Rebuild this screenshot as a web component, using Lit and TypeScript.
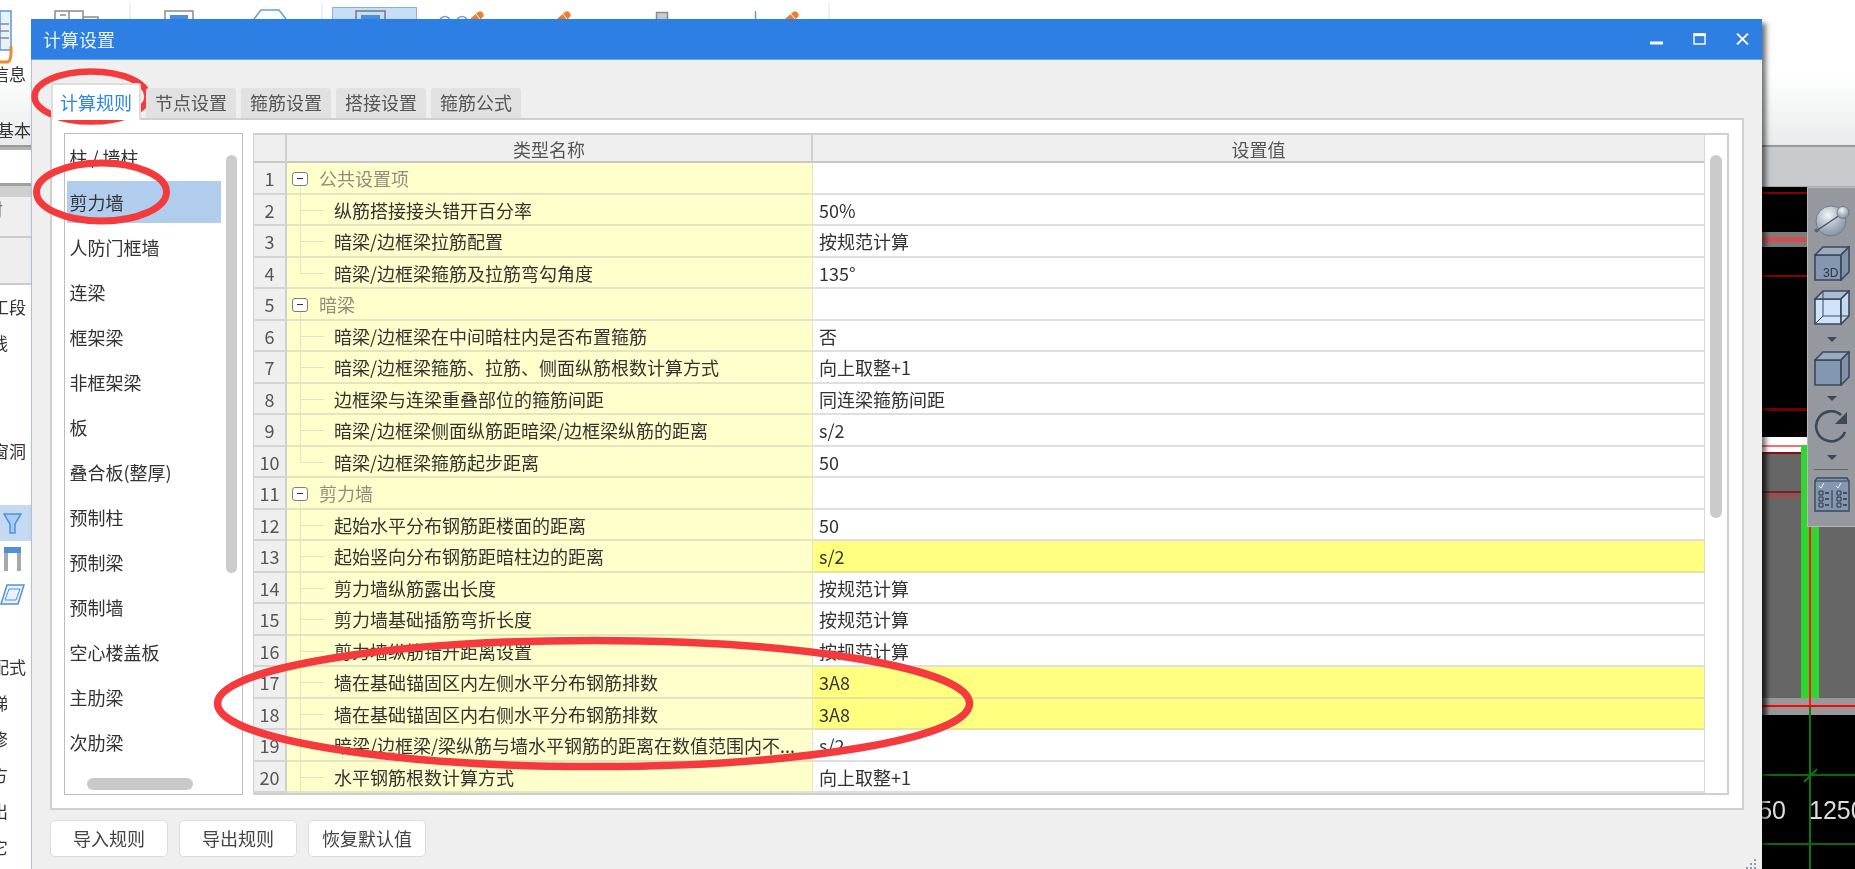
import { LitElement, html, css, svg } from "lit";
import { customElement } from "lit/decorators.js";

type Row = { name: string; val?: string; group?: boolean; hl?: boolean; last?: boolean };
const ROWS: Row[] = [
  { name: "公共设置项", group: true },
  { name: "纵筋搭接接头错开百分率", val: "50%" },
  { name: "暗梁/边框梁拉筋配置", val: "按规范计算" },
  { name: "暗梁/边框梁箍筋及拉筋弯勾角度", val: "135°", last: true },
  { name: "暗梁", group: true },
  { name: "暗梁/边框梁在中间暗柱内是否布置箍筋", val: "否" },
  { name: "暗梁/边框梁箍筋、拉筋、侧面纵筋根数计算方式", val: "向上取整+1" },
  { name: "边框梁与连梁重叠部位的箍筋间距", val: "同连梁箍筋间距" },
  { name: "暗梁/边框梁侧面纵筋距暗梁/边框梁纵筋的距离", val: "s/2" },
  { name: "暗梁/边框梁箍筋起步距离", val: "50", last: true },
  { name: "剪力墙", group: true },
  { name: "起始水平分布钢筋距楼面的距离", val: "50" },
  { name: "起始竖向分布钢筋距暗柱边的距离", val: "s/2", hl: true },
  { name: "剪力墙纵筋露出长度", val: "按规范计算" },
  { name: "剪力墙基础插筋弯折长度", val: "按规范计算" },
  { name: "剪力墙纵筋错开距离设置", val: "按规范计算" },
  { name: "墙在基础锚固区内左侧水平分布钢筋排数", val: "3A8", hl: true },
  { name: "墙在基础锚固区内右侧水平分布钢筋排数", val: "3A8", hl: true },
  { name: "暗梁/边框梁/梁纵筋与墙水平钢筋的距离在数值范围内不...", val: "s/2" },
  { name: "水平钢筋根数计算方式", val: "向上取整+1" },
];
const LIST = ["柱 / 墙柱", "剪力墙", "人防门框墙", "连梁", "框架梁", "非框架梁", "板", "叠合板(整厚)", "预制柱", "预制梁", "预制墙", "空心楼盖板", "主肋梁", "次肋梁"];
const TABS = ["计算规则", "节点设置", "箍筋设置", "搭接设置", "箍筋公式"];

const cube = html`<svg class="ti" width="36" height="35" viewBox="0 0 36 35"><path d="M1 9H27V34H1Z" fill="#8497b0" stroke="#3d4757" stroke-width="1.6"/><path d="M1 9L9 1H35L27 9Z" fill="#9aaabf" stroke="#3d4757" stroke-width="1.6"/><path d="M27 9L35 1V26L27 34Z" fill="#7f92ab" stroke="#3d4757" stroke-width="1.6"/></svg>`;
const arrow = html`<svg class="ta" width="10" height="5" viewBox="0 0 10 5"><path d="M0 0H10L5 5Z" fill="#3d4757"/></svg>`;
const pencil = (x: number) => svg`<path d="M${x + 2} 21L${x + 9} 15" stroke="#f07f2c" stroke-width="7" stroke-linecap="round"/><path d="M${x + 5} 14L${x + 9} 19" stroke="#fff" stroke-width="1"/>`;

@customElement("app-root")
export class AppRoot extends LitElement {
  static styles = css`
    :host { display: block; width: 1855px; height: 869px; overflow: hidden; }
    * { box-sizing: border-box; }
    .app { position: relative; width: 1855px; height: 869px; overflow: hidden; background: #fff; display: flex; flex-direction: column; color: #333;
      font: 18px/24px "Noto Sans CJK SC", "Noto Sans", sans-serif; filter: blur(0.45px); }
    .ribbon { position: relative; height: 147px; flex: none; background: linear-gradient(#fff 50%, #e9ecec); border-bottom: 2px solid #9a9a9a; }
    .ribbon svg { position: absolute; left: 0; top: 0; }
    .rlabels { width: 31px; height: 100%; overflow: hidden; padding-top: 62px; display: flex; flex-direction: column; gap: 32px; position: relative; }
    .rlabels div { display: flex; justify-content: flex-end; white-space: nowrap; padding-right: 5px; font-size: 17px; }
    .rlabels div.e0 { padding-right: 0; }
    .main { flex: 1; display: flex; min-height: 0; }
    .side { width: 31px; flex: none; overflow: hidden; display: flex; flex-direction: column; background: #fff; }
    .s1 { height: 36px; flex: none; border-top: 3px solid #b3b3b3; }
    .s2 { height: 14px; flex: none; background: #cdcfd1; border-top: 3px solid #a0a0a0; }
    .s3 { height: 41px; flex: none; background: #efefef; border-bottom: 2px solid #ccc; display: flex; justify-content: flex-end; align-items: flex-start; padding-right: 28px; font-size: 17px; color: #777; white-space: nowrap; }
    .s4 { height: 47px; flex: none; background: #eee; border-bottom: 2px solid #ccc; margin-bottom: 4px; }
    .srow { height: 36px; flex: none; display: flex; justify-content: flex-end; align-items: center; white-space: nowrap; font-size: 17px; }
    .srow.wide { padding-right: 5px; }
    .srow.narrow { padding-right: 23px; }
    .srow.icon { justify-content: center; padding-right: 6px; }
    .srow.sel { background: #c5d9f1; }
    .right { flex: 1; display: flex; flex-direction: column; min-width: 0; }
    .band { height: 40px; flex: none; background: #c8cbce; border-bottom: 1px solid #aaa; }
    .canvas { flex: 1; display: block; }
    .canvas text { font: 25px "Liberation Sans", sans-serif; fill: #ddd; }
    .tool { position: absolute; left: 1807px; top: 187px; width: 48px; height: 340px; background: #95989e; border: 1px solid #b5b7ba; border-right: 0; display: flex; flex-direction: column; align-items: flex-start; padding: 16px 0 0 6px; }
    .tool svg { display: block; flex: none; }
    .ti { margin-bottom: 9px; }
    .ta { margin: 1px 0 9px 13px; }
    .tsep { width: 34px; height: 1px; background: #5f636a; margin: 0 0 7px 0; flex: none; }

    .dialog { position: absolute; left: 31px; top: 19px; width: 1731px; height: 850px; background: #efefef; display: flex; flex-direction: column; box-shadow: 4px 4px 5px rgba(0,0,0,.55); border-left: 1px solid #b4c0d0; }
    .title { height: 41px; flex: none; margin-left: -1px; background: #2d7fe3; border-bottom: 1px solid #6aa5ee; color: #fff; display: flex; align-items: center; padding-left: 12px; font-size: 18px; }
    .title .t { flex: 1; color: #e8f1fc; }
    .wbtns { display: flex; align-items: flex-start; gap: 30px; padding-right: 13px; }
    .wbtns svg { display: block; }
    .dbody { flex: 1; display: flex; flex-direction: column; padding: 0 18px 0 18px; position: relative; }
    .tabs { display: flex; gap: 5px; height: 34px; margin: 24px 0 0 1px; align-items: flex-end; flex: none; position: relative; z-index: 1; }
    .tab { width: 90px; height: 30px; background: #e1e1e1; color: #555; text-align: center; line-height: 29px; border-radius: 3px 3px 0 0; font-size: 18px; }
    .tab.on { height: 37px; margin-bottom: -2px; background: #fff; color: #2d86e8; line-height: 35px; border: 2px solid #ddd; border-bottom: 0; }
    .panel { height: 692px; flex: none; background: #fff; border: 2px solid #d0d0d0; padding: 13px 13px 13px 12px; display: flex; gap: 10px; }
    .list { width: 179px; flex: none; height: 100%; border: 1.5px solid #bdbdbd; padding: 0 0 0 1.5px; position: relative; display: flex; flex-direction: column; overflow: hidden; }
    .li { width: 154px; height: 42px; margin: 1.5px 0; flex: none; padding-left: 3px; line-height: 42px; color: #333; }
    .li.sel { background: #b1cdee; }
    .vs1 { position: absolute; left: 161px; top: 21px; width: 11px; height: 418px; border-radius: 6px; background: #cbcbcb; }
    .hs1 { position: absolute; left: 22px; top: 644px; width: 106px; height: 12px; border-radius: 6px; background: #c9c9c9; }
    .grid { flex: 1; min-width: 0; height: 100%; border: 2px solid #cfcfcf; border-left-width: 1px; display: flex; }
    .table { flex: 1; min-width: 0; display: flex; flex-direction: column; }
    .tr { display: grid; grid-template-columns: 33px 526px 1fr; height: 31.5px; flex: none; }
    .tr.head { height: 28px; }
    .tr > div { border-bottom: 2px solid #dfdfdf; white-space: nowrap; overflow: hidden; }
    .head > div { background: #efefef; text-align: center; line-height: 29px; color: #555; border-bottom-color: #c9c9c9; border-right: 2px solid #d0d0d0; }
    .head > div:last-child { border-right: 0; }
    .num { background: #efefef; text-align: center; line-height: 31px; color: #555; border-right: 2px solid #d0d0d0; border-bottom-color: #d4d4d4 !important; }
    .name { background: #ffffcb; position: relative; padding-left: 47px; line-height: 31px; color: #333; border-right: 1px solid #e6e6c0; border-bottom-color: #e4e4c4 !important; }
    .name.group { padding-left: 32px; color: #8e8e80; }
    .name::before { content: ""; position: absolute; left: 12.5px; top: 0; bottom: -2px; width: 1px; background: #e2e2c6; }
    .name::after { content: ""; position: absolute; left: 13px; top: 15px; width: 24px; height: 1px; background: #e2e2c6; }
    .name.last::before { bottom: 14px; }
    .name.group::after { display: none; }
    .name.group::before { top: 22px; }
    .box { position: absolute; left: 5px; top: 9px; width: 16px; height: 14px; background: #fff; border: 1.5px solid #7d7d7d; border-radius: 3px; z-index: 1; }
    .box::after { content: ""; position: absolute; left: 3.5px; top: 4.5px; width: 6px; height: 1.5px; background: #333; }
    .val { background: #fff; padding-left: 6px; line-height: 31px; color: #333; }
    .val.hl { background: #ffff80; border-bottom-color: #e4e4a0 !important; }
    .vs2 { width: 23px; flex: none; background: #fff; border-left: 1.5px solid #d8d8d8; padding: 20px 0 0 4.5px; }
    .vs2 div { width: 12px; height: 363px; border-radius: 6px; background: #cbcbcb; }
    .btns { display: flex; gap: 11px; margin-top: 10px; flex: none; }
    .btn { width: 118px; height: 37px; background: #fff; border: 1.5px solid #dcdcdc; border-radius: 5px; text-align: center; line-height: 34px; color: #444; font-size: 18px; }
    .grip { position: absolute; right: 5px; bottom: 0; }
    .marks { position: absolute; left: 0; top: 0; pointer-events: none; }
  `;

  render() {
    return html`<div class="app">
      <div class="ribbon">
        <svg width="1855" height="147" viewBox="0 0 1855 147">
          ${svg`
          <path d="M0 11H11V50H0Z" fill="#e9f1fb" stroke="#5b96dd" stroke-width="1.5"/>
          <path d="M0 24H9M0 31H9M0 38H9" stroke="#888" stroke-width="1.5"/>
          <path d="M0 62H7Q11 62 11 52V46" fill="none" stroke="#ee8a2c" stroke-width="3"/>
          <path d="M55 19V11H83V19M98 19V17H83M69 11V19M60 15H66" fill="none" stroke="#8a8a8a" stroke-width="1.5"/>
          <path d="M130 3V19M322 3V19M829 3V19" stroke="#e0e0e0" stroke-width="1"/>
          <path d="M165 19V11H193V19" fill="none" stroke="#8a8a8a" stroke-width="1.5"/><rect x="170" y="15" width="18" height="4" fill="#4a8fe0"/>
          <path d="M254 19L261 10H279L286 19" fill="none" stroke="#5f9fe6" stroke-width="1.5"/>
          <rect x="332.5" y="7.5" width="84" height="14" fill="#c7def8" stroke="#80b3ee"/>
          <path d="M356 19V11H385V19" fill="none" stroke="#777" stroke-width="1.5"/><rect x="361" y="15" width="19" height="4" fill="#4a8fe0"/>
          <circle cx="445" cy="22" r="5.5" fill="none" stroke="#6aa2e2" stroke-width="1.5"/><circle cx="462" cy="22" r="5.5" fill="none" stroke="#6aa2e2" stroke-width="1.5"/>
          ${pencil(471)}${pencil(558)}${pencil(786)}
          <rect x="656.5" y="12.5" width="11" height="8" fill="#ccc" stroke="#8c8c8c" stroke-width="1.5"/>
          <path d="M755.5 11V19" stroke="#5f9fe6" stroke-width="1.5"/>
          `}
        </svg>
        <div class="rlabels"><div>信息</div><div class="e0">基本</div></div>
      </div>
      <div class="main">
        <div class="side">
          <div class="s1"></div><div class="s2"></div><div class="s3">材</div><div class="s4"></div>
          <div class="srow wide">工段</div>
          <div class="srow narrow">线</div>
          <div class="srow"></div><div class="srow"></div>
          <div class="srow wide">窗洞</div>
          <div class="srow"></div>
          <div class="srow icon sel"><svg width="19" height="21" viewBox="0 0 19 21"><path d="M1 1H18L12 11V20H7V11Z" fill="#a9cdf2" stroke="#4e92dc" stroke-width="1.5"/></svg></div>
          <div class="srow icon"><svg width="19" height="24" viewBox="0 0 19 24"><rect x="1" y="0" width="17" height="6" fill="#4e92dc"/><rect x="1" y="6" width="4" height="18" fill="#a5a8ac"/><rect x="14" y="6" width="4" height="18" fill="#a5a8ac"/></svg></div>
          <div class="srow icon"><svg width="25" height="22" viewBox="0 0 25 22"><path d="M7 1H24L18 20H1Z" fill="#eaf2fb" stroke="#4e92dc" stroke-width="1.5"/><path d="M9 5H20L16 16H5Z" fill="none" stroke="#4e92dc"/></svg></div>
          <div class="srow"></div>
          <div class="srow wide">配式</div>
          <div class="srow narrow">梯</div>
          <div class="srow narrow">修</div>
          <div class="srow narrow">方</div>
          <div class="srow narrow">出</div>
          <div class="srow narrow">它</div>
        </div>
        <div class="right">
          <div class="band"></div>
          <svg class="canvas" width="1824" height="682" viewBox="31 187 1824 682">
            ${svg`
            <defs><linearGradient id="shade" x1="0" x2="1"><stop offset="0" stop-color="#000" stop-opacity=".45"/><stop offset="1" stop-color="#000" stop-opacity="0"/></linearGradient></defs>
            <rect x="31" y="187" width="1824" height="682" fill="#000"/>
            <rect x="1762" y="192" width="93" height="2" fill="#8a0000"/>
            <rect x="1762" y="232" width="93" height="15" fill="#7c7c7c"/><rect x="1762" y="237" width="93" height="5" fill="#d24f4f"/>
            <rect x="1762" y="275" width="93" height="2" fill="#8a0000"/>
            <rect x="1762" y="408" width="93" height="3" fill="#6e0000"/>
            <rect x="1762" y="437" width="93" height="16" fill="#fff"/>
            <rect x="1762" y="445" width="93" height="2" fill="#f47070"/>
            <rect x="1762" y="452" width="93" height="2" fill="#8a1010"/>
            <rect x="1762" y="454" width="93" height="244" fill="#666"/>
            <rect x="1762" y="491" width="93" height="2" fill="#802020"/><rect x="1762" y="495" width="93" height="2" fill="#c83a3a"/>
            <rect x="1762" y="698" width="93" height="17" fill="#999"/>
            <rect x="1801" y="445" width="18" height="253" fill="#2ed62e"/>
            <rect x="1809" y="445" width="2" height="261" fill="#ee1c1c"/>
            <rect x="1762" y="705" width="93" height="2" fill="#f00"/>
            <rect x="1762" y="454" width="8" height="261" fill="url(#shade)"/>
            <rect x="1809" y="707" width="2" height="162" fill="#0a7a0a"/>
            <rect x="1762" y="774" width="93" height="2" fill="#0a6a0a"/>
            <rect x="1762" y="843" width="93" height="2" fill="#0a6a0a"/>
            <path d="M1804 782L1817 769" stroke="#0a7a0a" stroke-width="2"/>
            <text x="1786" y="819" text-anchor="end">250</text>
            <text x="1809" y="819">1250</text>
            `}
          </svg>
        </div>
      </div>

      <div class="tool">
        <svg width="36" height="33" viewBox="0 0 36 33" style="margin-bottom:9px">
          ${svg`<defs><radialGradient id="ball" cx=".4" cy=".3" r=".8"><stop offset="0" stop-color="#f2f4f7"/><stop offset=".6" stop-color="#a3aebd"/><stop offset="1" stop-color="#7b8799"/></radialGradient></defs>
          <circle cx="17" cy="17" r="15" fill="url(#ball)" stroke="#707b8b"/>
          <path d="M2 27L29 9" stroke="#4c5665" stroke-width="1.5"/><circle cx="2.5" cy="26.5" r="2" fill="#5b6574"/>
          <circle cx="29" cy="8.5" r="6" fill="url(#ball)" stroke="#6e7989"/>`}
        </svg>
        <div style="position:relative;height:35px;margin-bottom:9px;flex:none">
          ${cube}
          <svg width="22" height="12" style="position:absolute;left:8px;top:20px;overflow:visible">${svg`<text x="1" y="11" font-family="Liberation Sans" font-size="12" fill="#2e3645">3D</text>`}</svg>
        </div>
        <svg width="36" height="35" viewBox="0 0 36 35" style="margin-bottom:11px"><path d="M1 9H27V34H1Z" fill="#cfe4fb" stroke="#3d4757" stroke-width="1.6"/><path d="M1 9L9 1H35L27 9Z" fill="#aabdd6" stroke="#3d4757" stroke-width="1.6"/><path d="M27 9L35 1V26L27 34Z" fill="#c3d9f2" stroke="#3d4757" stroke-width="1.6"/><path d="M9 1V26H35M9 26L1 34" fill="none" stroke="#3d4757"/></svg>
        ${arrow}
        ${cube}
        ${arrow}
        <svg width="36" height="33" viewBox="0 0 36 33" style="margin-bottom:11px"><path d="M31 22A15 15 0 1 1 27 5" fill="none" stroke="#3d4757" stroke-width="2.6"/><path d="M33 2V14H21Z" fill="#3d4757"/></svg>
        ${arrow}
        <div class="tsep"></div>
        <svg width="36" height="35" viewBox="0 0 36 35"><path d="M1 4L3 1H33L35 4V34H1Z" fill="#8497b0" stroke="#3d4757" stroke-width="1.4"/><path d="M1 4H35M18 13V31" stroke="#3d4757" stroke-width="1.2"/><path d="M5 9L7 11L10 6M22 9L24 11L27 6" fill="none" stroke="#e6edf5" stroke-width="1"/><path d="M5 14H9V18H5ZM5 20H9V24H5ZM5 26H9V30H5ZM23 14H27V18H23ZM23 20H27V24H23ZM23 26H27V30H23Z" fill="none" stroke="#2e3645"/><path d="M11 16H15M11 22H15M11 28H15M29 16H33M29 22H33M29 28H33" stroke="#2e3645" stroke-width="1.4"/></svg>
      </div>

      <div class="dialog">
        <div class="title">
          <div class="t">计算设置</div>
          <div class="wbtns">
            <svg width="13" height="12" viewBox="0 0 13 12"><rect x="0" y="8.5" width="13" height="3" fill="#fff"/></svg>
            <svg width="13" height="12" viewBox="0 0 13 12"><path d="M1 1H12V11H1Z" fill="none" stroke="#fff" stroke-width="1.4"/><rect x="0.5" y="0.5" width="12" height="2.6" fill="#fff"/></svg>
            <svg width="13" height="12" viewBox="0 0 13 12"><path d="M1 0.5L12 11.5M12 0.5L1 11.5" stroke="#fff" stroke-width="1.8"/></svg>
          </div>
        </div>
        <div class="dbody">
          <div class="tabs">${TABS.map((t, i) => html`<div class="tab ${i === 0 ? "on" : ""}">${t}</div>`)}</div>
          <div class="panel">
            <div class="list">
              ${LIST.map((t, i) => html`<div class="li ${i === 1 ? "sel" : ""}">${t}</div>`)}
              <div class="vs1"></div><div class="hs1"></div>
            </div>
            <div class="grid">
              <div class="table">
                <div class="tr head"><div></div><div>类型名称</div><div>设置值</div></div>
                ${ROWS.map((r, i) => html`<div class="tr">
                  <div class="num">${i + 1}</div>
                  <div class="name ${r.group ? "group" : ""} ${r.last ? "last" : ""}">${r.group ? html`<span class="box"></span>` : ""}${r.name}</div>
                  <div class="val ${r.hl ? "hl" : ""}">${r.val ?? ""}</div>
                </div>`)}
              </div>
              <div class="vs2"><div></div></div>
            </div>
          </div>
          <div class="btns"><div class="btn">导入规则</div><div class="btn">导出规则</div><div class="btn">恢复默认值</div></div>
          <svg class="grip" width="13" height="11" viewBox="0 0 13 11"><path d="M10 1h2v2h-2zM6 5h2v2H6zM10 5h2v2h-2zM2 9h2v2H2zM6 9h2v2H6zM10 9h2v2h-2z" fill="#8f9aa5"/></svg>
        </div>
      </div>

      <svg class="marks" width="1855" height="869" viewBox="0 0 1855 869">
        <ellipse cx="91" cy="96.5" rx="56.5" ry="25" fill="none" stroke="#f43a3d" stroke-width="6.5"/>
        <ellipse cx="101.5" cy="192" rx="65" ry="29" fill="none" stroke="#f43a3d" stroke-width="7"/>
        <ellipse cx="593.5" cy="703.5" rx="376" ry="63" fill="none" stroke="#f43a3d" stroke-width="7.5"/>
      </svg>
    </div>`;
  }
}
